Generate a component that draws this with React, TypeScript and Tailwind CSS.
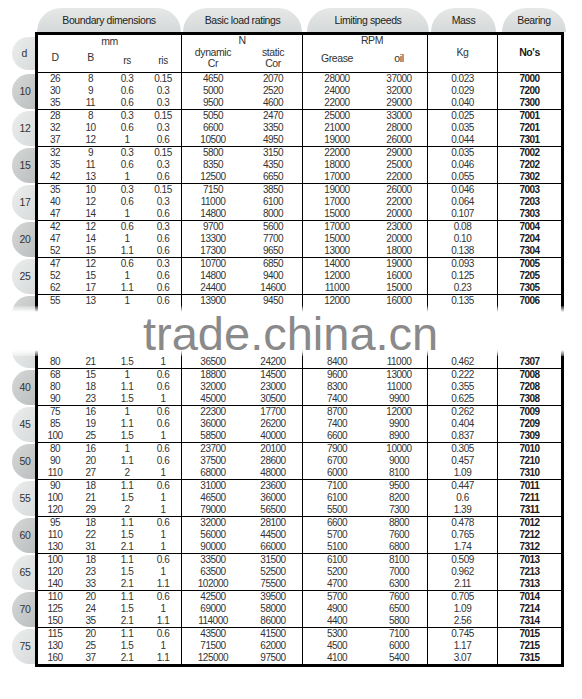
import React from 'react'

type Row = string[]

const blank: Row = ['', '', '', '', '', '', '', '', '', '']

const groups: { d: string; dark: boolean; rows: Row[] }[] = [
  { d: '10', dark: true, rows: [
    ['26', '8', '0.3', '0.15', '4650', '2070', '28000', '37000', '0.023', '7000'],
    ['30', '9', '0.6', '0.3', '5000', '2520', '24000', '32000', '0.029', '7200'],
    ['35', '11', '0.6', '0.3', '9500', '4600', '22000', '29000', '0.040', '7300'],
  ] },
  { d: '12', dark: false, rows: [
    ['28', '8', '0.3', '0.15', '5050', '2470', '25000', '33000', '0.025', '7001'],
    ['32', '10', '0.6', '0.3', '6600', '3350', '21000', '28000', '0.035', '7201'],
    ['37', '12', '1', '0.6', '10500', '4950', '19000', '26000', '0.044', '7301'],
  ] },
  { d: '15', dark: true, rows: [
    ['32', '9', '0.3', '0.15', '5800', '3150', '22000', '29000', '0.035', '7002'],
    ['35', '11', '0.6', '0.3', '8350', '4350', '18000', '25000', '0.046', '7202'],
    ['42', '13', '1', '0.6', '12500', '6650', '17000', '22000', '0.055', '7302'],
  ] },
  { d: '17', dark: false, rows: [
    ['35', '10', '0.3', '0.15', '7150', '3850', '19000', '26000', '0.046', '7003'],
    ['40', '12', '0.6', '0.3', '11000', '6100', '17000', '22000', '0.064', '7203'],
    ['47', '14', '1', '0.6', '14800', '8000', '15000', '20000', '0.107', '7303'],
  ] },
  { d: '20', dark: true, rows: [
    ['42', '12', '0.6', '0.3', '9700', '5600', '17000', '23000', '0.08', '7004'],
    ['47', '14', '1', '0.6', '13300', '7700', '15000', '20000', '0.10', '7204'],
    ['52', '15', '1.1', '0.6', '17300', '9650', '13000', '18000', '0.138', '7304'],
  ] },
  { d: '25', dark: false, rows: [
    ['47', '12', '0.6', '0.3', '10700', '6850', '14000', '19000', '0.093', '7005'],
    ['52', '15', '1', '0.6', '14800', '9400', '12000', '16000', '0.125', '7205'],
    ['62', '17', '1.1', '0.6', '24400', '14600', '11000', '15000', '0.23', '7305'],
  ] },
  // rows under the watermark band are unreadable in the source
  { d: '', dark: true, rows: [
    ['55', '13', '1', '0.6', '13900', '9450', '12000', '16000', '0.135', '7006'],
    blank,
    blank,
  ] },
  { d: '', dark: false, rows: [
    blank,
    blank,
    ['80', '21', '1.5', '1', '36500', '24200', '8400', '11000', '0.462', '7307'],
  ] },
  { d: '40', dark: true, rows: [
    ['68', '15', '1', '0.6', '18800', '14500', '9600', '13000', '0.222', '7008'],
    ['80', '18', '1.1', '0.6', '32000', '23000', '8300', '11000', '0.355', '7208'],
    ['90', '23', '1.5', '1', '45000', '30500', '7400', '9900', '0.625', '7308'],
  ] },
  { d: '45', dark: false, rows: [
    ['75', '16', '1', '0.6', '22300', '17700', '8700', '12000', '0.262', '7009'],
    ['85', '19', '1.1', '0.6', '36000', '26200', '7400', '9900', '0.404', '7209'],
    ['100', '25', '1.5', '1', '58500', '40000', '6600', '8900', '0.837', '7309'],
  ] },
  { d: '50', dark: true, rows: [
    ['80', '16', '1', '0.6', '23700', '20100', '7900', '10000', '0.305', '7010'],
    ['90', '20', '1.1', '0.6', '37500', '28600', '6700', '9000', '0.457', '7210'],
    ['110', '27', '2', '1', '68000', '48000', '6000', '8100', '1.09', '7310'],
  ] },
  { d: '55', dark: false, rows: [
    ['90', '18', '1.1', '0.6', '31000', '23600', '7100', '9500', '0.447', '7011'],
    ['100', '21', '1.5', '1', '46500', '36000', '6100', '8200', '0.6', '7211'],
    ['120', '29', '2', '1', '79000', '56500', '5500', '7300', '1.39', '7311'],
  ] },
  { d: '60', dark: true, rows: [
    ['95', '18', '1.1', '0.6', '32000', '28100', '6600', '8800', '0.478', '7012'],
    ['110', '22', '1.5', '1', '56000', '44500', '5700', '7600', '0.765', '7212'],
    ['130', '31', '2.1', '1', '90000', '66000', '5100', '6800', '1.74', '7312'],
  ] },
  { d: '65', dark: false, rows: [
    ['100', '18', '1.1', '0.6', '33500', '31500', '6100', '8100', '0.509', '7013'],
    ['120', '23', '1.5', '1', '63500', '52500', '5200', '7000', '0.962', '7213'],
    ['140', '33', '2.1', '1.1', '102000', '75500', '4700', '6300', '2.11', '7313'],
  ] },
  { d: '70', dark: true, rows: [
    ['110', '20', '1.1', '0.6', '42500', '39500', '5700', '7600', '0.705', '7014'],
    ['125', '24', '1.5', '1', '69000', '58000', '4900', '6500', '1.09', '7214'],
    ['150', '35', '2.1', '1.1', '114000', '86000', '4400', '5800', '2.56', '7314'],
  ] },
  { d: '75', dark: false, rows: [
    ['115', '20', '1.1', '0.6', '43500', '41500', '5300', '7100', '0.745', '7015'],
    ['130', '25', '1.5', '1', '71500', '62000', '4500', '6000', '1.17', '7215'],
    ['160', '37', '2.1', '1.1', '125000', '97500', '4100', '5400', '3.07', '7315'],
  ] },
]

// cell widths incl. the 1px column rule where there is one
const cellClass = [
  'w-[34px]',
  'w-[37px]',
  'w-[36px]',
  'w-[37px] border-r border-black',
  'w-[62px]',
  'w-[59px] border-r border-black',
  'w-[68px]',
  'w-[57px] border-r border-black',
  'w-[70px] border-r border-black',
  'w-[63px] font-bold text-[#1a1a1a]',
]

function Tab({ label, width }: { label: string; width: string }) {
  return (
    <div
      className={`${width} flex h-[24px] items-center justify-center rounded-t-[24px] bg-linear-to-b from-[#e6e8e8] to-[#d6d9d9] pt-[2px] text-[10.5px] tracking-[-0.4px] text-[#222]`}
    >
      {label}
    </div>
  )
}

function DataRow({ row }: { row: Row }) {
  return (
    <div className="flex h-[12px] text-[10px] leading-[12px] tracking-[-0.5px]">
      {row.map((v, i) => (
        <div key={i} className={`${cellClass[i]} text-center`}>
          {v}
        </div>
      ))}
    </div>
  )
}

export default function App() {
  return (
    <div className="relative h-[699px] w-[582px] overflow-hidden bg-white font-['Liberation_Sans',Arial,sans-serif] text-[#333]">
      {/* column titles */}
      <div className="flex h-[32px] items-end gap-[2px] pl-[37px]">
        <Tab label="Boundary dimensions" width="w-[144px]" />
        <Tab label="Basic load ratings" width="w-[119px]" />
        <div className="w-[1px]" />
        <Tab label="Limiting speeds" width="w-[122px]" />
        <Tab label="Mass" width="w-[65px]" />
        <div className="w-[2px]" />
        <Tab label="Bearing" width="w-[64px]" />
      </div>

      <div className="flex">
        {/* d column */}
        <div className="flex w-[35px] flex-col">
          <div className="h-[41px] pt-[5px]">
            <div className="ml-[12px] flex h-[33px] w-[23px] items-center justify-center rounded-l-full bg-linear-to-br from-[#eceeee] to-[#d9dcdc] pl-[2px] text-[10.5px]">
              d
            </div>
          </div>
          {groups.map((g, gi) => (
            <div key={gi} className="h-[37px] pt-[1px]">
              <div
                className={`ml-[12px] flex h-[35px] w-[23px] items-center justify-center rounded-l-full pl-[3px] text-[10.5px] tracking-[-0.4px] ${
                  g.dark
                    ? 'bg-linear-to-br from-[#d6d8d8] to-[#bcbfbf]'
                    : 'bg-linear-to-br from-[#eceeee] to-[#d8dbdb]'
                }`}
              >
                {g.d}
              </div>
            </div>
          ))}
        </div>

        {/* table */}
        <div className="w-[529px] border-[3px] border-black">
          <div className="flex h-[38px] border-b border-black text-[10.5px] tracking-[-0.4px]">
            <div className="flex w-[144px] flex-col border-r border-black">
              <div className="h-[12px] text-center leading-[12px]">mm</div>
              <div className="flex pt-[4px] leading-[12px]">
                <div className="w-[34px] text-center">D</div>
                <div className="w-[37px] text-center">B</div>
                <div className="w-[36px] translate-y-[3px] text-center">
                  r<span className="text-[10px]">s</span>
                </div>
                <div className="w-[36px] translate-y-[3px] text-center">
                  r<span className="text-[10px]">is</span>
                </div>
              </div>
            </div>
            <div className="flex w-[121px] flex-col border-r border-black">
              <div className="h-[12px] text-center leading-[10px]">N</div>
              <div className="flex leading-[11px]">
                <div className="w-[62px] text-center">
                  dynamic
                  <br />
                  Cr
                </div>
                <div className="w-[58px] text-center">
                  static
                  <br />
                  Cor
                </div>
              </div>
            </div>
            <div className="flex w-[125px] flex-col border-r border-black">
              <div className="h-[12px] pl-[14px] text-center leading-[11px]">RPM</div>
              <div className="flex pt-[5px] leading-[12px]">
                <div className="w-[68px] text-center">Grease</div>
                <div className="w-[56px] text-center">oil</div>
              </div>
            </div>
            <div className="w-[70px] border-r border-black pt-[11px] text-center leading-[12px]">Kg</div>
            <div className="w-[63px] pt-[11px] text-center font-bold leading-[12px] text-[#1a1a1a]">No's</div>
          </div>

          {groups.map((g, gi) => (
            <div
              key={gi}
              className={gi < groups.length - 1 ? 'border-b border-black' : ''}
            >
              {g.rows.map((r, ri) => (
                <DataRow key={ri} row={r} />
              ))}
            </div>
          ))}
        </div>
      </div>

      {/* watermark band */}
      <div className="absolute left-0 top-[306px] flex h-[50px] w-full flex-col">
        <div className="h-[6px] bg-linear-to-b from-white/20 to-white" />
        <div className="flex-1 bg-white" />
        <div className="h-[6px] bg-linear-to-b from-white to-white/30" />
        <div className="absolute left-[143px] top-[8px] text-[47px] leading-[40px] text-[#8a8a8a]">
          trade.china.cn
        </div>
      </div>
    </div>
  )
}
